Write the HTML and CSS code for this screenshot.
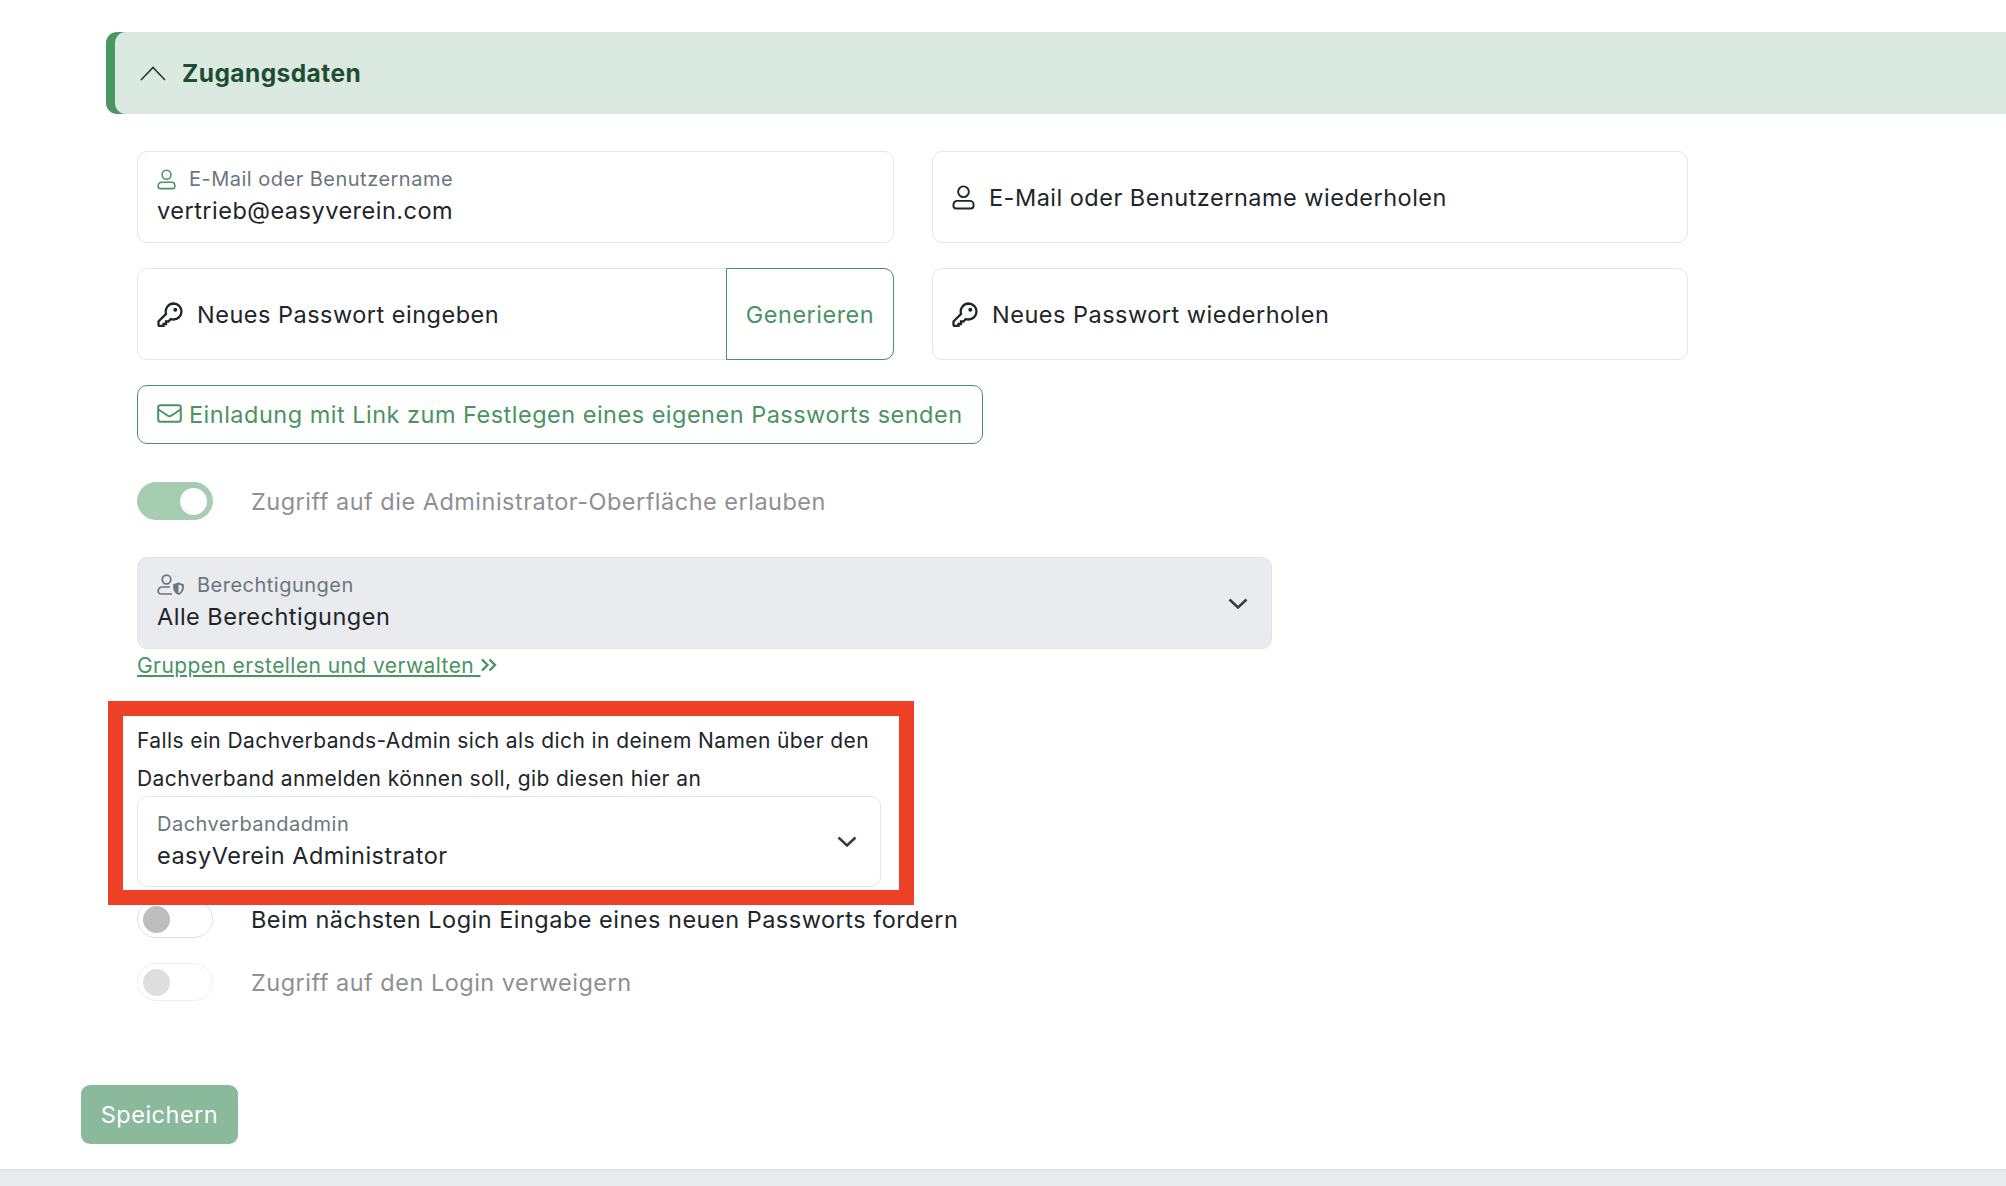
FILE: index.html
```html
<!DOCTYPE html>
<html lang="de">
<head>
    <meta charset="UTF-8">
    <meta name="viewport" content="width=device-width, initial-scale=1.0">
    <title>Zugangsdaten</title>
    <link rel="stylesheet" href="styles.css">
</head>
<body>
    <div class="page">
        <div class="section-head">
            <div class="section-inner">
                <svg class="head-chevron" viewBox="0 0 26 15"><path d="M1 14 13 1.500 25 14"/></svg>
                <span>Zugangsdaten</span>
            </div>
        </div>

        <div class="form">
            <div class="field-grid">
                <div class="field">
                    <div class="field-label">
                        <svg class="icon icon-user icon-green" viewBox="0 0 24 26"><circle cx="12" cy="7" r="5.600"/><path d="M5.500 16.500h13a4 4 0 0 1 4 4v1.200a2.800 2.800 0 0 1-2.800 2.800H4.300a2.800 2.800 0 0 1-2.800-2.800v-1.200a4 4 0 0 1 4-4z"/></svg>
                        E-Mail oder Benutzername
                    </div>
                    <div class="field-value">vertrieb@easyverein.com</div>
                </div>
                <div class="field field-empty">
                    <svg class="icon icon-user-lg" viewBox="0 0 24 26"><circle cx="12" cy="7" r="5.600"/><path d="M5.500 16.500h13a4 4 0 0 1 4 4v1.200a2.800 2.800 0 0 1-2.800 2.800H4.300a2.800 2.800 0 0 1-2.800-2.800v-1.200a4 4 0 0 1 4-4z"/></svg>
                    <span>E-Mail oder Benutzername wiederholen</span>
                </div>
                <div class="field field-empty field-split">
                    <div class="field-main">
                        <svg class="icon icon-key" viewBox="0 0 26 25"><path d="M16.500 1.500a8 8 0 0 1 0 16c-1 0-2-.2-2.800-.5l-2.200 2.500H9v2.500H6.500v2H2.700a1.200 1.200 0 0 1-1.200-1.200v-3.300l7.600-7.600a8 8 0 0 1 7.400-10.400z"/><circle cx="18.300" cy="7.700" r="2" class="icon-fill"/></svg>
                        <span>Neues Passwort eingeben</span>
                    </div>
                    <div class="generate">Generieren</div>
                </div>
                <div class="field field-empty">
                    <svg class="icon icon-key" viewBox="0 0 26 25"><path d="M16.500 1.500a8 8 0 0 1 0 16c-1 0-2-.2-2.800-.5l-2.200 2.500H9v2.500H6.500v2H2.700a1.200 1.200 0 0 1-1.200-1.200v-3.300l7.600-7.600a8 8 0 0 1 7.400-10.400z"/><circle cx="18.300" cy="7.700" r="2" class="icon-fill"/></svg>
                    <span>Neues Passwort wiederholen</span>
                </div>
            </div>

            <div class="invite">
                <svg class="icon icon-mail" viewBox="0 0 25 19"><rect x="1.200" y="1.200" width="22.600" height="16.600" rx="2.200"/><path d="M1.500 5.500 10.500 11.500a3.500 3.500 0 0 0 4 0L23.500 5.500"/></svg>
                <span>Einladung mit Link zum Festlegen eines eigenen Passworts senden</span>
            </div>

            <div class="toggle-row toggle-row-admin">
                <div class="toggle toggle-on"><div class="knob"></div></div>
                <span class="toggle-text muted">Zugriff auf die Administrator-Oberfläche erlauben</span>
            </div>

            <div class="field select select-disabled">
                <div class="field-label label-perm">
                    <svg class="icon icon-perm" viewBox="0 0 27 22"><circle cx="9.500" cy="5.500" r="4.300"/><path d="M13 13H5a3.800 3.800 0 0 0-3.800 3.800v.4A2.800 2.800 0 0 0 4 20h11"/><path class="icon-solid" d="M21.500 8.500l5.300 1.800v3.700c0 3-2.100 5.600-5.300 7-3.200-1.400-5.300-4-5.300-7v-3.700zM21.500 10.600v8.600c2.100-1.200 3.400-3 3.400-5.200v-2.300z"/></svg>
                    Berechtigungen
                </div>
                <div class="field-value">Alle Berechtigungen</div>
                <svg class="select-chevron" viewBox="0 0 20 11"><path d="M1.500 1.500 10 9.500l8.500-8"/></svg>
            </div>
            <div class="group-link"><a href="#">Gruppen erstellen und verwalten </a><svg class="icon-dbl" viewBox="0 0 17 14"><path d="M2 1.500 7.500 7 2 12.500M9.500 1.500 15 7l-5.500 5.500"/></svg></div>

            <div class="highlight">
                <p class="hint">Falls ein Dachverbands-Admin sich als dich in deinem Namen über den Dachverband anmelden können soll, gib diesen hier an</p>
                <div class="field select select-admin">
                    <div class="field-label">Dachverbandadmin</div>
                    <div class="field-value">easyVerein Administrator</div>
                    <svg class="select-chevron" viewBox="0 0 20 11"><path d="M1.500 1.500 10 9.500l8.500-8"/></svg>
                </div>
            </div>

            <div class="toggle-row">
                <div class="toggle"><div class="knob"></div></div>
                <span class="toggle-text">Beim nächsten Login Eingabe eines neuen Passworts fordern</span>
            </div>
            <div class="toggle-row toggle-row-last">
                <div class="toggle toggle-disabled"><div class="knob"></div></div>
                <span class="toggle-text muted">Zugriff auf den Login verweigern</span>
            </div>
        </div>

        <div class="save">Speichern</div>
    </div>
    <div class="page-foot"></div>
</body>
</html>
```

FILE: styles.css
```css
* {
    box-sizing: border-box;
}
html, body {
    margin: 0;
    height: 1186px;
    overflow: hidden;
}
body {
    font-family: Inter, "Liberation Sans", sans-serif;
    font-size: 23.5px;
    letter-spacing: 0.49px;
    color: #212529;
    background: #fff;
}
.page {
    height: 1169px;
    padding: 32px 0 0 81px;
}
.section-head {
    height: 82px;
    margin-left: 25px;
    background: #4a9764;
    border-radius: 11px 0 0 11px;
}
.section-inner {
    height: 82px;
    margin-left: 9px;
    padding-left: 25px;
    display: flex;
    align-items: center;
    gap: 16px;
    background: #dbeae1;
    border-radius: 11px 0 0 11px;
    font-size: 24.5px;
    font-weight: 700;
    letter-spacing: 0.43px;
    color: #1f4d33;
}
.head-chevron {
    width: 26px;
    height: 15px;
    fill: none;
    stroke: #1f3b2b;
    stroke-width: 1.6;
}
.form {
    margin-left: 56px;
    padding-top: 37px;
}
.field-grid {
    display: grid;
    grid-template-columns: 757px 756px;
    column-gap: 38px;
    row-gap: 25px;
}
.field {
    height: 92px;
    border: 1px solid #e3e5e8;
    border-radius: 10px;
    padding: 14px 19px 0;
    background: #fff;
    position: relative;
}
.field-label {
    height: 26px;
    display: flex;
    align-items: center;
    gap: 13px;
    font-size: 20px;
    line-height: 26px;
    color: #6c757d;
}
.field-value {
    line-height: 37px;
}
.field-empty {
    display: flex;
    align-items: center;
    gap: 14px;
    padding-top: 0;
}
.field-split {
    padding: 0;
}
.field-main {
    flex: 1;
    display: flex;
    align-items: center;
    gap: 14px;
    padding-left: 19px;
}
.generate {
    width: 168px;
    height: 92px;
    margin: -1px;
    display: flex;
    align-items: center;
    justify-content: center;
    border: 1px solid #4f9068;
    border-radius: 0 10px 10px 0;
    color: #4a9363;
}
.icon {
    flex: none;
    fill: none;
    stroke: currentColor;
    stroke-width: 2;
}
.icon-green {
    color: #4a9363;
}
.icon-user {
    width: 19px;
    height: 21px;
}
.icon-user-lg {
    width: 23px;
    height: 25px;
}
.icon-key {
    width: 26px;
    height: 25px;
    stroke-width: 2.3;
}
.icon-fill {
    fill: currentColor;
    stroke: none;
}
.invite {
    width: 846px;
    height: 59px;
    margin-top: 25px;
    padding-left: 19px;
    display: flex;
    align-items: center;
    gap: 7px;
    border: 1px solid #4f9068;
    border-radius: 10px;
    color: #4a9363;
}
.icon-mail {
    width: 25px;
    height: 19px;
    margin-top: -2px;
}
.toggle-row {
    display: flex;
    align-items: center;
    gap: 38px;
    height: 38px;
    margin-top: 25px;
}
.toggle-row-admin {
    margin-top: 38px;
}
.toggle {
    width: 76px;
    height: 38px;
    padding: 5px;
    border: 1px solid #dfe1e4;
    border-radius: 19px;
    background: #fff;
}
.knob {
    width: 27px;
    height: 27px;
    border-radius: 50%;
    background: #bdbdbd;
}
.toggle-on {
    display: flex;
    justify-content: flex-end;
    border-color: #a6cdb2;
    background: #a6cdb2;
}
.toggle-on .knob {
    background: #fff;
}
.toggle-disabled {
    border-color: #efeff1;
}
.toggle-disabled .knob {
    background: #dedede;
}
.muted {
    color: #8e9093;
}
.select-disabled {
    width: 1135px;
    margin-top: 37px;
    background: #e9ebef;
}
.icon-perm {
    width: 27px;
    height: 22px;
    stroke-width: 1.7;
}
.icon-solid {
    fill: currentColor;
    fill-rule: evenodd;
    stroke: none;
}
.select-chevron {
    position: absolute;
    right: 23px;
    top: 40px;
    width: 20px;
    height: 11px;
    fill: none;
    stroke: #343a40;
    stroke-width: 2.5;
}
.group-link {
    margin-top: 2px;
    height: 28px;
    display: flex;
    align-items: center;
    font-size: 21px;
    letter-spacing: 0.42px;
}
.group-link a {
    color: #4a9363;
    white-space: pre;
}
.icon-dbl {
    width: 17px;
    height: 14px;
    fill: none;
    stroke: #4a9363;
    stroke-width: 2.4;
}
.highlight {
    position: relative;
    z-index: 1;
    width: 806px;
    height: 204px;
    margin: 22px 0 0 -29px;
    padding: 6px 14px 0;
    border: 15px solid #ec4027;
    background: #fff;
}
.hint {
    margin: 0;
    font-size: 21px;
    line-height: 38px;
    letter-spacing: 0.4px;
}
.select-admin {
    width: 744px;
    height: 91px;
    margin-top: -2px;
}
.select-admin .select-chevron {
    right: 23px;
    top: 39px;
}
.highlight + .toggle-row {
    margin-top: -5px;
}
.save {
    width: 157px;
    height: 59px;
    margin-top: 84px;
    display: flex;
    align-items: center;
    justify-content: center;
    border-radius: 9px;
    background: #8aba9b;
    color: #fff;
}
.page-foot {
    height: 17px;
    background: #e9ebef;
    box-shadow: inset 0 3px 3px -2px #dcdee2;
}
```
